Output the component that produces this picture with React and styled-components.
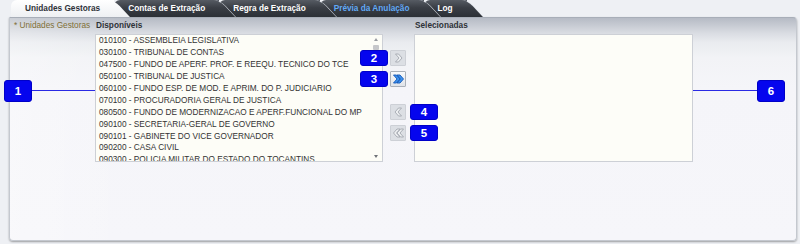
import React from "react";
import styled, { createGlobalStyle } from "styled-components";

const GlobalStyle = createGlobalStyle`
  html, body { margin: 0; padding: 0; background: #eef0f4; }
  body { font-family: "Liberation Sans", Arial, sans-serif; }
  * { box-sizing: border-box; }
`;

const Page = styled.div`
  position: relative;
  width: 800px;
  height: 244px;
  display: flex;
  flex-direction: column;
  overflow: hidden;
`;

const TabRow = styled.div`
  display: flex;
  height: 17px;
  padding-left: 11px;
  flex-shrink: 0;
`;

const Tab = styled.div`
  position: relative;
  z-index: ${(p) => p.$z};
  height: 17px;
  padding: 0 14px;
  display: flex;
  align-items: center;
  font-size: 8.25px;
  font-weight: bold;
  white-space: nowrap;
  border-radius: 6px 0 0 0;
  color: ${(p) => (p.$active ? "#2f3338" : p.$link ? "#62aaf6" : "#ffffff")};
  background: ${(p) =>
    p.$active
      ? "linear-gradient(to bottom, #ffffff 0%, #eef0f3 100%)"
      : "linear-gradient(to bottom, #565b63 0%, #3a3e45 45%, #2c3036 100%)"};

  &::after {
    content: "";
    position: absolute;
    top: 0;
    bottom: 0;
    right: -8px;
    width: 18px;
    background: inherit;
    transform: skewX(43deg);
    border-top-right-radius: 6px;
    box-shadow: ${(p) => (p.$active ? "none" : "1px 0 0 rgba(225,229,236,0.85)")};
  }

  span {
    position: relative;
    z-index: 2;
  }
`;

const Panel = styled.div`
  flex: 1;
  margin: 0 3px 3px 9px;
  border: 1px solid #c4c8cf;
  border-top-color: #a8aeb8;
  border-radius: 0 4px 4px 4px;
  background:
    linear-gradient(to right, rgba(255, 255, 255, 0.3), rgba(255, 255, 255, 0) 120px),
    linear-gradient(to bottom, #b6bbc5 0px, #c6cad2 7px, #d9dce2 15px, #e9ebef 24px, #f2f3f6 40px, #f5f5f9 70px, #f6f6fa 100%);
  box-shadow: 0 1px 2px rgba(0, 0, 0, 0.35);
  display: flex;
  align-items: flex-start;
`;

const FieldLabel = styled.div`
  width: 85px;
  padding-left: 4px;
  line-height: 16px;
  font-size: 8.25px;
  color: #7f6f35;
  white-space: nowrap;
`;

const Column = styled.div`
  display: flex;
  flex-direction: column;
  width: ${(p) => p.$w}px;
`;

const Heading = styled.div`
  height: 16px;
  line-height: 16px;
  padding-left: 1px;
  font-size: 8.25px;
  font-weight: bold;
  color: #2e3237;
`;

const ListBox = styled.div`
  height: 128px;
  border: 1px solid #cdd0d6;
  background: #fdfdf7;
  display: flex;
  overflow: hidden;
`;

const Items = styled.div`
  flex: 1;
  overflow: hidden;
  padding-left: 3px;
`;

const Item = styled.div`
  line-height: 11.95px;
  height: 11.95px;
  font-size: 8.25px;
  color: #333333;
  white-space: nowrap;
`;

const ScrollTrack = styled.div`
  width: 13px;
  display: flex;
  flex-direction: column;
  align-items: center;
  padding: 3px 0 3px;
`;

const Arrow = styled.div`
  width: 0;
  height: 0;
  border-left: 2.5px solid transparent;
  border-right: 2.5px solid transparent;
  ${(p) =>
    p.$down
      ? "border-top: 3px solid #6f7278;"
      : "border-bottom: 3px solid #9a9da2;"}
`;

const Thumb = styled.div`
  width: 6px;
  height: 5px;
  margin-top: 4px;
  background: #c6c7ca;
  border-radius: 1px;
`;

const Spacer = styled.div`
  flex: 1;
`;

const ButtonColumn = styled.div`
  width: 31px;
  padding: 32px 0 0 7px;
  display: flex;
  flex-direction: column;
`;

const MoveButton = styled.button`
  width: 16px;
  height: 16px;
  padding: 0;
  margin: 0 0 ${(p) => p.$gap}px 0;
  display: flex;
  align-items: center;
  justify-content: center;
  border: 1px solid ${(p) => (p.$active ? "#aab0b9" : "#cdd0d6")};
  background: ${(p) =>
    p.$active ? "linear-gradient(to bottom, #f8f9fb, #e0e3e8)" : "#dcdfe4"};
  border-radius: 1px;
`;

const SelectedBox = styled.div`
  height: 128px;
  border: 1px solid #cdd0d6;
  background: #fdfdf8;
`;

const Badge = styled.div`
  position: absolute;
  left: ${(p) => p.$x}px;
  top: ${(p) => p.$y}px;
  width: ${(p) => p.$w}px;
  height: ${(p) => p.$h}px;
  background: #0505ee;
  border: 1px solid #0000c8;
  border-radius: 3px;
  color: #ffffff;
  font-size: 11.5px;
  font-weight: bold;
  display: flex;
  align-items: center;
  justify-content: center;
  z-index: 10;
`;

const Leader = styled.div`
  position: absolute;
  left: ${(p) => p.$x}px;
  top: ${(p) => p.$y}px;
  width: ${(p) => p.$w}px;
  height: 1px;
  background: #2a2ae4;
  z-index: 9;
`;

const tabs = [
  { label: "Unidades Gestoras", active: true },
  { label: "Contas de Extração" },
  { label: "Regra de Extração" },
  { label: "Prévia da Anulação", link: true },
  { label: "Log" },
];

const items = [
  "010100 - ASSEMBLEIA LEGISLATIVA",
  "030100 - TRIBUNAL DE CONTAS",
  "047500 - FUNDO DE APERF. PROF. E REEQU. TECNICO DO TCE",
  "050100 - TRIBUNAL DE JUSTICA",
  "060100 - FUNDO ESP. DE MOD. E APRIM. DO P. JUDICIARIO",
  "070100 - PROCURADORIA GERAL DE JUSTICA",
  "080500 - FUNDO DE MODERNIZACAO E APERF.FUNCIONAL DO MP",
  "090100 - SECRETARIA-GERAL DE GOVERNO",
  "090101 - GABINETE DO VICE GOVERNADOR",
  "090200 - CASA CIVIL",
  "090300 - POLICIA MILITAR DO ESTADO DO TOCANTINS",
];

function Chevrons({ double, left, active }) {
  const fill = active ? "#3b91ee" : "#eef0f2";
  const stroke = active ? "#1457b8" : "#a4a8b0";
  const one = "2.5,1 5.5,1 9,5 5.5,9 2.5,9 6,5";
  const a = "0.5,1 3.5,1 7,5 3.5,9 0.5,9 4,5";
  const b = "4,1 7,1 10.5,5 7,9 4,9 7.5,5";
  return (
    <svg
      width="11"
      height="10"
      viewBox="0 0 11 10"
      style={left ? { transform: "scaleX(-1)" } : undefined}
    >
      {double ? (
        <>
          <polygon points={a} fill={fill} stroke={stroke} strokeWidth="0.9" strokeLinejoin="round" />
          <polygon points={b} fill={fill} stroke={stroke} strokeWidth="0.9" strokeLinejoin="round" />
        </>
      ) : (
        <polygon points={one} fill={fill} stroke={stroke} strokeWidth="0.9" strokeLinejoin="round" />
      )}
    </svg>
  );
}

export default function App() {
  return (
    <>
      <GlobalStyle />
      <Page>
        <TabRow>
          {tabs.map((t, i) => (
            <Tab key={t.label} $z={tabs.length - i} $active={t.active} $link={t.link}>
              <span>{t.label}</span>
            </Tab>
          ))}
        </TabRow>
        <Panel>
          <FieldLabel>* Unidades Gestoras</FieldLabel>
          <Column $w={288}>
            <Heading>Disponíveis</Heading>
            <ListBox>
              <Items>
                {items.map((it) => (
                  <Item key={it}>{it}</Item>
                ))}
              </Items>
              <ScrollTrack>
                <Arrow />
                <Thumb />
                <Spacer />
                <Arrow $down />
              </ScrollTrack>
            </ListBox>
          </Column>
          <ButtonColumn>
            <MoveButton $gap={5} aria-label="Adicionar">
              <Chevrons />
            </MoveButton>
            <MoveButton $gap={17} $active aria-label="Adicionar todos">
              <Chevrons double active />
            </MoveButton>
            <MoveButton $gap={5} aria-label="Remover">
              <Chevrons left />
            </MoveButton>
            <MoveButton $gap={0} aria-label="Remover todos">
              <Chevrons double left />
            </MoveButton>
          </ButtonColumn>
          <Column $w={279}>
            <Heading>Selecionadas</Heading>
            <SelectedBox />
          </Column>
        </Panel>

        <Leader $x={32} $y={90} $w={63} />
        <Badge $x={4} $y={80} $w={28} $h={22}>1</Badge>
        <Badge $x={360} $y={50} $w={28} $h={16}>2</Badge>
        <Badge $x={360} $y={71} $w={28} $h={16}>3</Badge>
        <Badge $x={410} $y={104} $w={28} $h={16}>4</Badge>
        <Badge $x={410} $y={125} $w={28} $h={16}>5</Badge>
        <Leader $x={693} $y={90} $w={64} />
        <Badge $x={757} $y={80} $w={28} $h={22}>6</Badge>
      </Page>
    </>
  );
}
